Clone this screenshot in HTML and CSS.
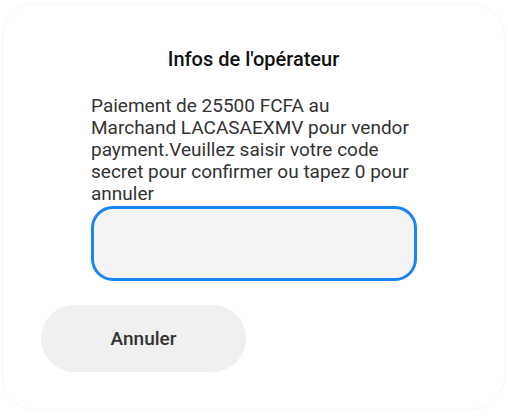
FILE: index.html
```html
<!DOCTYPE html>
<html lang="fr">
<head>
    <meta charset="UTF-8">
    <title>Infos de l'opérateur</title>
    <link rel="stylesheet" href="styles.css">
</head>
<body>
    <div class="dialog">
        <h2 class="dialog-title">Infos de l'opérateur</h2>
        <div class="dialog-body">
            <p class="dialog-message">Paiement de 25500 FCFA au Marchand LACASAEXMV pour vendor payment.Veuillez saisir votre code secret pour confirmer ou tapez 0 pour annuler</p>
            <input class="code-input" type="text">
        </div>
        <div class="dialog-actions">
            <button class="btn-cancel">Annuler</button>
        </div>
    </div>
</body>
</html>
```

FILE: styles.css
```css
* {
    margin: 0;
    padding: 0;
    box-sizing: border-box;
}

body {
    font-family: Roboto, "Liberation Sans", Arial, sans-serif;
    background-color: #fff;
}

.dialog {
    margin: 3px 3px 0 2px;
    height: 407px;
    border: 1px solid #f7f7f7;
    border-radius: 34px;
    background-color: #fff;
    padding-top: 42px;
}

.dialog-title {
    text-align: center;
    font-size: 20px;
    font-weight: 500;
    color: #111;
    line-height: 26px;
}

.dialog-body {
    padding: 23px 0 0 88px;
}

.dialog-message {
    width: 318px;
    font-size: 19px;
    line-height: 22px;
    color: #333;
}

.code-input {
    display: block;
    margin-top: 1px;
    width: 326px;
    height: 75px;
    border: 3px solid #1a86f2;
    border-radius: 22px;
    background-color: #f4f4f4;
    outline: none;
}

.dialog-actions {
    padding: 24px 0 0 38px;
}

.btn-cancel {
    width: 205px;
    height: 67px;
    border: none;
    border-radius: 34px;
    background-color: #f0f0f0;
    font-family: inherit;
    font-size: 19px;
    font-weight: 500;
    color: #333;
    cursor: pointer;
}
```
